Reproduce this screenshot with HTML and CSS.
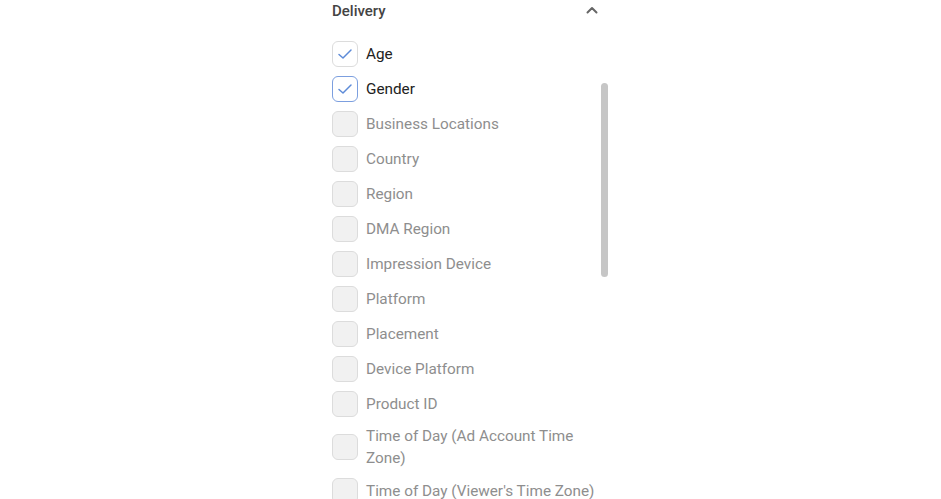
FILE: index.html
```html
<!DOCTYPE html>
<html lang="en">
<head>
<meta charset="UTF-8">
<meta name="viewport" content="width=device-width, initial-scale=1.0">
<title>Breakdown</title>
<link rel="stylesheet" href="styles.css">
</head>
<body>
<div class="panel">
<div class="panel-header">
<span class="panel-title">Delivery</span>
<svg class="chevron" width="12" height="8" viewBox="0 0 12 8"><polyline points="1.5,6.5 6,2 10.5,6.5" fill="none" stroke="#666" stroke-width="2" stroke-linecap="round" stroke-linejoin="round"/></svg>
</div>
<div class="option-list">
<div class="scrollbar"></div>
<label class="option checked">
<span class="box"><svg width="16" height="12" viewBox="0 0 16 12"><polyline points="2,6.5 6,10 14,2" fill="none" stroke="#5d8bd8" stroke-width="1.5" stroke-linecap="round" stroke-linejoin="round"/></svg></span>
<span class="label">Age</span>
</label>
<label class="option checked focused">
<span class="box"><svg width="16" height="12" viewBox="0 0 16 12"><polyline points="2,6.5 6,10 14,2" fill="none" stroke="#5d8bd8" stroke-width="1.5" stroke-linecap="round" stroke-linejoin="round"/></svg></span>
<span class="label">Gender</span>
</label>
<label class="option"><span class="box"></span><span class="label">Business Locations</span></label>
<label class="option"><span class="box"></span><span class="label">Country</span></label>
<label class="option"><span class="box"></span><span class="label">Region</span></label>
<label class="option"><span class="box"></span><span class="label">DMA Region</span></label>
<label class="option"><span class="box"></span><span class="label">Impression Device</span></label>
<label class="option"><span class="box"></span><span class="label">Platform</span></label>
<label class="option"><span class="box"></span><span class="label">Placement</span></label>
<label class="option"><span class="box"></span><span class="label">Device Platform</span></label>
<label class="option"><span class="box"></span><span class="label">Product ID</span></label>
<label class="option"><span class="box"></span><span class="label">Time of Day (Ad Account Time Zone)</span></label>
<label class="option"><span class="box"></span><span class="label">Time of Day (Viewer's Time Zone)</span></label>
</div>
</div>
</body>
</html>
```

FILE: styles.css
```css
* {
margin: 0;
padding: 0;
box-sizing: border-box;
font-family: Roboto, "Liberation Sans", Arial, sans-serif;
}
body {
background-color: #fff;
height: 499px;
overflow: hidden;
}
.panel {
width: 277px;
margin: 0 auto;
}
/* Header */
.panel-header {
display: flex;
justify-content: space-between;
align-items: center;
height: 22px;
padding-right: 11px;
}
.panel-title {
font-size: 15px;
font-weight: 500;
color: #444;
}
.chevron {
margin-top: -2px;
}
/* Option list */
.option-list {
position: relative;
margin-top: 14px;
padding-right: 8px;
}
.scrollbar {
position: absolute;
top: 47px;
right: 1px;
width: 7px;
height: 194px;
border-radius: 4px;
background-color: #c6c6c6;
}
.option {
display: flex;
align-items: center;
gap: 8px;
min-height: 35px;
padding: 4px 0;
cursor: pointer;
}
.box {
flex: none;
display: flex;
align-items: center;
justify-content: center;
width: 26px;
height: 26px;
border: 1px solid #dcdcdc;
border-radius: 6px;
background-color: #f1f1f1;
}
.label {
font-size: 15.3px;
line-height: 22px;
color: #8e8e8e;
}
.option.checked .box {
background-color: #fff;
}
.option.checked .label {
color: #222;
}
.option.focused .box {
border: 1.5px solid #7c9fdf;
}
```
